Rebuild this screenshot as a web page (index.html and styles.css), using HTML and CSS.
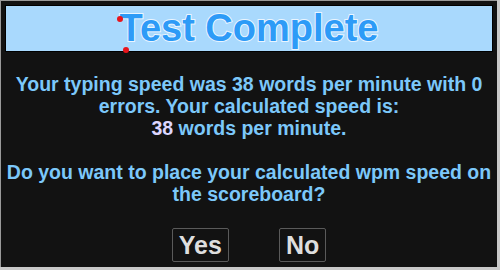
FILE: index.html
```html
<!DOCTYPE html>
<html lang="en">

<head>
    <meta charset="UTF-8">
    <meta name="viewport" content="width=device-width, initial-scale=1.0">
    <title>Test Complete</title>
    <link rel="stylesheet" href="styles.css">
</head>

<body>
    <div class="dialog">
        <header>
            <h1>Test Complete</h1>
            <span class="dot top"></span>
            <span class="dot bottom"></span>
        </header>
        <div class="result">
            <p>Your typing speed was 38 words per minute with 0 errors. Your calculated speed is:<br>
                <span class="wpm">38</span> words per minute.</p>
            <p>Do you want to place your calculated wpm speed on the scoreboard?</p>
        </div>
        <div class="control">
            <button type="button">Yes</button>
            <button type="button">No</button>
        </div>
    </div>
</body>

</html>
```

FILE: styles.css
```css
* {
    box-sizing: border-box;
}

body {
    margin: 0;
    background-color: #c9c9c9;
    font-family: "Liberation Sans", Arial, sans-serif;
}

.dialog {
    display: flex;
    flex-flow: column nowrap;
    width: 497px;
    height: 267px;
    padding: 4px;
    background-color: #121212;
    border-top: 1px solid #9a9a9a;
    border-left: 1px solid #9a9a9a;
}

header {
    position: relative;
    height: 47px;
    background-color: #a9d9fd;
    border: 1px solid #000;
    text-align: center;
}

h1 {
    margin: 0;
    font-size: 38px;
    line-height: 44px;
    color: #2d9bf7;
    -webkit-text-stroke: 2px #eaf5ff;
    paint-order: stroke fill;
}

.dot {
    position: absolute;
    width: 6px;
    height: 6px;
    border-radius: 100%;
    background-color: #e8141b;
}

.dot.top {
    left: 111px;
    top: 10px;
}

.dot.bottom {
    left: 117px;
    top: 41px;
}

.result {
    margin-top: 21px;
    text-align: center;
    font-size: 19.5px;
    font-weight: bold;
    line-height: 22px;
    color: #7cc8fa;
}

.result p {
    margin: 0 0 22px;
}

.wpm {
    color: #dcd6ff;
}

.control {
    display: flex;
    justify-content: center;
    gap: 50px;
    margin-top: 1px;
}

button {
    height: 34px;
    padding: 0 6px;
    font-family: inherit;
    font-size: 25px;
    font-weight: bold;
    color: #dedede;
    background-color: #121212;
    border: 1px solid #5a5a5a;
    border-radius: 2px;
}
```
